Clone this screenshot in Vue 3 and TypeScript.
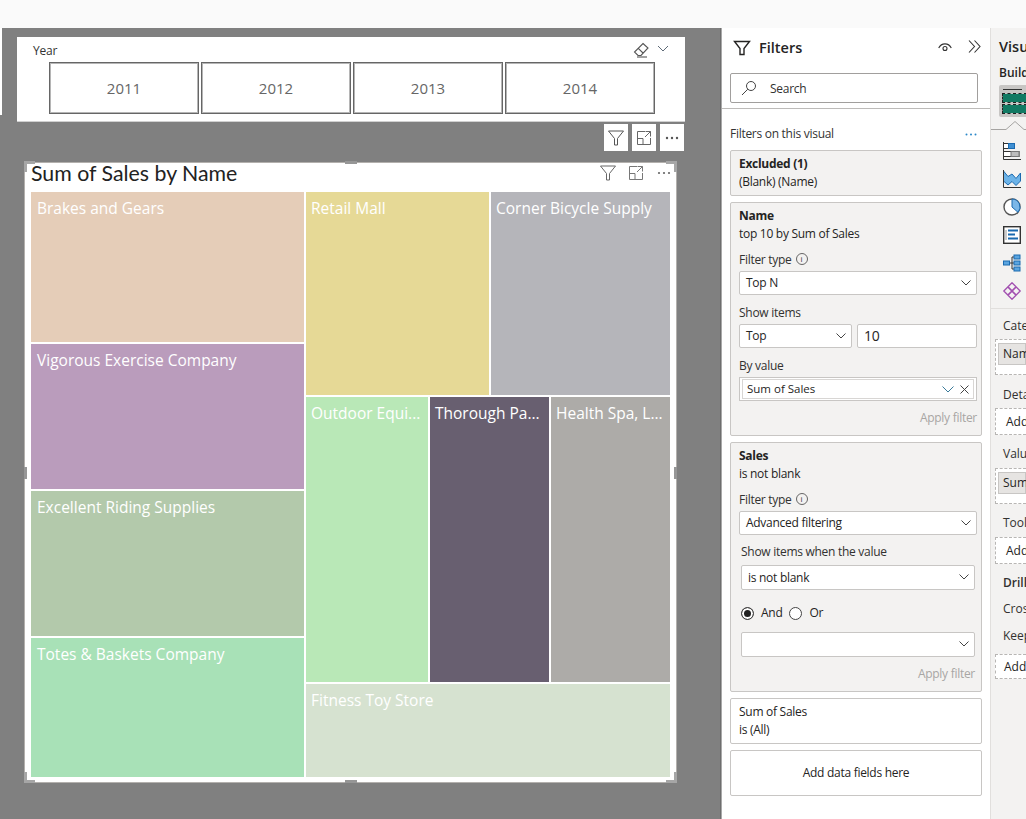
<template>
  <div class="app">
    <div class="topbar"></div>
    <div class="main">
      <section class="canvas">
        <div class="slicer">
          <div class="slicerHead">
            <span class="slicerTitle">Year</span>
            <svg class="eraser" width="16" height="16" viewBox="0 0 16 16">
              <path d="M10 1.500 15 6l-7 7.500H5L1.500 10zM5 6.200l5 4.800" fill="none" stroke="#555" stroke-width="1.100" />
              <path d="M4 15h10" fill="none" stroke="#555" stroke-width="1.100" />
            </svg>
            <svg class="chev" width="12" height="7" viewBox="0 0 12 7">
              <path d="M1 1l5 5 5-5" fill="none" stroke="#5f6b78" stroke-width="1" />
            </svg>
          </div>
          <div class="years">
            <div v-for="y in years" :key="y" class="yearBtn">{{ y }}</div>
          </div>
        </div>
        <div class="slicerTools">
          <span class="toolBox">
            <svg width="18" height="18" viewBox="0 0 18 18"><path d="M1.500 2h15l-6 7.500V16h-3V9.500z" fill="none" stroke="#555" /></svg>
          </span>
          <span class="toolBox">
            <svg width="16" height="16" viewBox="0 0 16 16"><path d="M9 1.500h-7.500v13h13V8M1.500 8.500H7v6M9.500 1.500h5v5M14.500 1.500 9 7" fill="none" stroke="#666" /></svg>
          </span>
          <span class="toolBox">
            <svg width="14" height="4" viewBox="0 0 14 4"><circle cx="2" cy="2" r="1.200" fill="#555" /><circle cx="7" cy="2" r="1.200" fill="#555" /><circle cx="12" cy="2" r="1.200" fill="#555" /></svg>
          </span>
        </div>
        <div class="visual">
          <i class="corner tl"></i><i class="corner tr"></i><i class="corner bl"></i><i class="corner br"></i>
          <i class="grip top"></i><i class="grip bottom"></i><i class="gripV left"></i><i class="gripV right"></i>
          <div class="visualHead">
            <span class="visualTitle">Sum of Sales by Name</span>
            <svg class="hIcon" width="18" height="18" viewBox="0 0 18 18"><path d="M1.500 2h15l-6 7.500V16h-3V9.500z" fill="none" stroke="#666" /></svg>
            <svg class="hIcon last" width="16" height="16" viewBox="0 0 16 16"><path d="M9 1.500h-7.500v13h13V8M1.500 8.500H7v6M9.500 1.500h5v5M14.500 1.500 9 7" fill="none" stroke="#777" /></svg>
            <svg class="hDots" width="14" height="4" viewBox="0 0 14 4"><circle cx="2" cy="2" r="1.100" fill="#666" /><circle cx="7" cy="2" r="1.100" fill="#666" /><circle cx="12" cy="2" r="1.100" fill="#666" /></svg>
          </div>
          <div class="tree">
            <div class="treeLeft">
              <div v-for="c in leftCells" :key="c.name" class="cell" :style="{ height: c.h + 'px', background: c.color }">{{ c.name }}</div>
            </div>
            <div class="treeRight">
              <div class="treeRow rowTop">
                <div v-for="c in rowOne" :key="c.name" class="cell" :style="{ width: c.w + 'px', background: c.color }">{{ c.name }}</div>
              </div>
              <div class="treeRow rowMid">
                <div v-for="c in rowTwo" :key="c.name" class="cell" :style="{ width: c.w + 'px', background: c.color }">{{ c.name }}</div>
              </div>
              <div class="cell fitness">Fitness Toy Store</div>
            </div>
          </div>
        </div>
      </section>

      <aside class="filters">
        <div class="fHead">
          <svg width="18" height="18" viewBox="0 0 18 18"><path d="M1.500 2.500h15L11 9.500V15.500H7V9.500z" fill="none" stroke="#252423" stroke-width="1.400" /></svg>
          <span class="fTitle">Filters</span>
          <svg class="eye" width="14" height="9" viewBox="0 0 14 9"><path d="M.7 5c2.800-5.500 9.800-5.500 12.600 0" fill="none" stroke="#333" stroke-width="1.100" /><circle cx="7" cy="5.500" r="2" fill="none" stroke="#333" stroke-width="1.100" /></svg>
          <svg class="dbl" width="13" height="13" viewBox="0 0 13 13"><path d="M1 .5l5.500 6-5.500 6M6.500.5l5.500 6-5.500 6" fill="none" stroke="#333" stroke-width="1.100" /></svg>
        </div>
        <div class="search">
          <svg width="16" height="16" viewBox="0 0 16 16"><circle cx="10" cy="6" r="4.500" fill="none" stroke="#444" /><path d="M6.800 9.200 1 15" fill="none" stroke="#444" /></svg>
          <span>Search</span>
        </div>
        <div class="fRule"></div>
        <div class="onVisual">
          <span>Filters on this visual</span>
          <svg class="blueDots" width="12" height="3" viewBox="0 0 12 3"><circle cx="1.500" cy="1.500" r="1" fill="#2b88c8" /><circle cx="6" cy="1.500" r="1" fill="#2b88c8" /><circle cx="10.500" cy="1.500" r="1" fill="#2b88c8" /></svg>
        </div>

        <div class="fCard excluded">
          <b>Excluded (1)</b>
          <div>(Blank) (Name)</div>
        </div>

        <div class="fCard nameCard">
          <b>Name</b>
          <div>top 10 by Sum of Sales</div>
          <div class="lbl typeLbl">Filter type <span class="info">i</span></div>
          <div class="select">Top N<svg class="selChev" width="10" height="6" viewBox="0 0 10 6"><path d="M.5.500 5 5 9.500.500" fill="none" stroke="#444" /></svg></div>
          <div class="lbl showLbl">Show items</div>
          <div class="pair">
            <div class="select short">Top<svg class="selChev" width="10" height="6" viewBox="0 0 10 6"><path d="M.5.500 5 5 9.500.500" fill="none" stroke="#444" /></svg></div>
            <div class="select num">10</div>
          </div>
          <div class="lbl showLbl">By value</div>
          <div class="wellOuter">
            <div class="well">
              <span>Sum of Sales</span>
              <svg class="wellChev" width="12" height="7" viewBox="0 0 12 7"><path d="M.5.500 6 6l5.500-5.500" fill="none" stroke="#3a7a99" /></svg>
              <svg width="9" height="9" viewBox="0 0 9 9"><path d="M.5.500l8 8M8.500.500l-8 8" fill="none" stroke="#444" /></svg>
            </div>
          </div>
          <div class="apply">Apply filter</div>
        </div>

        <div class="fCard salesCard">
          <b>Sales</b>
          <div>is not blank</div>
          <div class="lbl typeLbl">Filter type <span class="info">i</span></div>
          <div class="select">Advanced filtering<svg class="selChev" width="10" height="6" viewBox="0 0 10 6"><path d="M.5.500 5 5 9.500.500" fill="none" stroke="#444" /></svg></div>
          <div class="lbl whenLbl">Show items when the value</div>
          <div class="select inset">is not blank<svg class="selChev" width="10" height="6" viewBox="0 0 10 6"><path d="M.5.500 5 5 9.500.500" fill="none" stroke="#444" /></svg></div>
          <div class="radios">
            <span class="radio on"></span><span>And</span>
            <span class="radio"></span><span>Or</span>
          </div>
          <div class="select inset"><svg class="selChev" width="10" height="6" viewBox="0 0 10 6"><path d="M.5.500 5 5 9.500.500" fill="none" stroke="#444" /></svg></div>
          <div class="apply second">Apply filter</div>
        </div>

        <div class="fCard white allCard">
          <div>Sum of Sales</div>
          <div>is (All)</div>
        </div>
        <div class="fCard white addCard">Add data fields here</div>
      </aside>

      <aside class="viz">
        <div class="vTitle">Visu</div>
        <div class="vBuild">Build</div>
        <div class="vSelected">
          <i class="vLine"></i>
          <i class="vBar"></i>
          <i class="vBar"></i>
        </div>
        <svg class="vNotch" width="35" height="14" viewBox="0 0 35 14"><path d="M0 13.500h15l9-8 9 8h2" fill="#f3f2f1" stroke="#a6a4a2" /></svg>
        <div class="vIcons">
          <svg width="18" height="18" viewBox="0 0 18 18"><path d="M.5 0v17.500H18" fill="none" stroke="#333" /><rect x=".5" y="1.500" width="11" height="5" fill="#fff" stroke="#333" /><rect x="5.500" y="1.500" width="6" height="5" fill="#3f8fd2" stroke="#1b6ab0" /><rect x=".5" y="9.500" width="15.500" height="5" fill="#fff" stroke="#333" /><rect x="8" y="9.500" width="8" height="5" fill="#bdbdbd" stroke="#777" /></svg>
          <svg width="18" height="18" viewBox="0 0 18 18"><path d="M.5 1 5 6.500 9 4l4 4.500L17.500 3v8L13 15.500 9 11.500l-4 3.500-4.500-4z" fill="#6cb3e8" stroke="#1b6ab0" /><path d="M.5 0v17.500H18" fill="none" stroke="#333" /></svg>
          <svg width="18" height="18" viewBox="0 0 18 18"><circle cx="9" cy="9" r="8" fill="#fff" stroke="#555" stroke-width="1.400" /><path d="M9 1a8 8 0 0 1 6 13.300L9 9z" fill="#7bb7e8" stroke="#1b6ab0" /></svg>
          <svg width="18" height="18" viewBox="0 0 18 18"><rect x=".7" y=".7" width="16.600" height="16.600" fill="#fff" stroke="#333" stroke-width="1.400" /><path d="M3 4v10" stroke="#999" /><path d="M5 4.500h10M5 8.500h7M5 12.500h10" stroke="#1b6ab0" stroke-width="1.800" /></svg>
          <svg width="18" height="18" viewBox="0 0 18 18"><path d="M6 9h5M9 3v12M9 3h2M9 15h2" stroke="#333" fill="none" /><rect x=".5" y="7" width="6" height="4" fill="#5ba5e0" stroke="#1b6ab0" /><rect x="11" y="1" width="6" height="4" fill="#5ba5e0" stroke="#1b6ab0" /><rect x="11" y="7" width="6" height="4" fill="#5ba5e0" stroke="#1b6ab0" /><rect x="11" y="13" width="6" height="4" fill="#5ba5e0" stroke="#1b6ab0" /></svg>
          <svg width="18" height="18" viewBox="0 0 18 18"><path d="M9 .8 13 4.800 9 8.800 5 4.800zM13.200 5 17.200 9 13.200 13 9.200 9zM9 9.200 13 13.200 9 17.200 5 13.200zM4.800 5 8.800 9 4.800 13 .8 9z" fill="none" stroke="#a24fb0" stroke-width="1.300" stroke-linejoin="round" /></svg>
        </div>
        <div class="vDivider"></div>
        <div class="vLabel cate">Cate</div>
        <div class="vDrop tall first"><span class="vPill">Nam</span></div>
        <div class="vLabel deta">Deta</div>
        <div class="vDrop first">Add</div>
        <div class="vLabel valu">Valu</div>
        <div class="vDrop tall"><span class="vPill">Sum</span></div>
        <div class="vLabel valu">Tool</div>
        <div class="vDrop">Add</div>
        <div class="vLabel valu"><b>Drill</b></div>
        <div class="vLabel cros">Cros</div>
        <div class="vLabel keep">Keep</div>
        <div class="vDrop add">Add</div>
      </aside>
    </div>
  </div>
</template>

<script setup lang="ts">
interface Cell {
  name: string;
  color: string;
  h?: number;
  w?: number;
}

const years: number[] = [2011, 2012, 2013, 2014];

const leftCells: Cell[] = [
  { name: "Brakes and Gears", color: "#e5cdb8", h: 150 },
  { name: "Vigorous Exercise Company", color: "#ba9cbc", h: 145 },
  { name: "Excellent Riding Supplies", color: "#b3c9ab", h: 145 },
  { name: "Totes & Baskets Company", color: "#a8e1b7", h: 139 },
];

const rowOne: Cell[] = [
  { name: "Retail Mall", color: "#e6d996", w: 183 },
  { name: "Corner Bicycle Supply", color: "#b5b5ba", w: 179 },
];

const rowTwo: Cell[] = [
  { name: "Outdoor Equi...", color: "#b9e8b7", w: 122 },
  { name: "Thorough Pa...", color: "#685f70", w: 119 },
  { name: "Health Spa, L...", color: "#adaba8", w: 119 },
];
</script>

<style>
html,
body {
  margin: 0;
  overflow: hidden;
}
</style>

<style scoped>
.app {
  width: 1026px;
  height: 819px;
  overflow: hidden;
  font-family: "Open Sans", "Liberation Sans", sans-serif;
  color: #252423;
  background: #fff;
  display: flex;
  flex-direction: column;
}
.topbar {
  height: 28px;
  background: #fafafa;
  flex: none;
}
.main {
  flex: 1;
  display: flex;
  min-height: 0;
}

/* canvas */
.canvas {
  width: 721px;
  flex: none;
  background: #808080;
  position: relative;
  padding-top: 9px;
  box-sizing: border-box;
  border-right: 1px solid #6e6e6e;
}
.canvas::before {
  content: "";
  position: absolute;
  left: 0;
  top: 0;
  width: 2px;
  height: 87px;
  background: #fff;
}
.slicer {
  margin-left: 17px;
  width: 668px;
  height: 85px;
  background: #fff;
  border-bottom: 1px solid #d0d0d0;
  box-sizing: border-box;
  padding: 5px 0 0 16px;
}
.slicerHead {
  display: flex;
  align-items: center;
  height: 17px;
  padding-right: 16px;
}
.slicerTitle {
  font-size: 12px;
  letter-spacing: -0.2px;
  color: #333;
  margin-right: auto;
}
.eraser {
  margin-right: 8px;
  margin-bottom: 1px;
}
.chev {
  margin-bottom: 5px;
}
.years {
  display: flex;
  gap: 2px;
  margin: 3px 0 0 16px;
}
.yearBtn {
  width: 150px;
  height: 52px;
  box-sizing: border-box;
  border: 1px solid #666;
  box-shadow: inset 0 0 0 1px #b5b5b5;
  display: flex;
  align-items: center;
  justify-content: center;
  font-size: 15px;
  color: #666;
}
.slicerTools {
  width: 667px;
  margin: 2px 0 0 17px;
  display: flex;
  justify-content: flex-end;
  gap: 4px;
  height: 27px;
}
.toolBox {
  width: 24px;
  height: 27px;
  background: #fff;
  display: flex;
  align-items: center;
  justify-content: center;
}
.visual {
  position: relative;
  margin: 11px 0 0 24px;
  width: 653px;
  height: 621px;
  box-sizing: border-box;
  background: #fff;
  border: 1px solid #b3b0ad;
  padding: 0 6px;
}
.corner {
  position: absolute;
  width: 8px;
  height: 8px;
  border: 0 solid #a6a6a6;
}
.corner.tl {
  left: -1px;
  top: -2px;
  border-width: 3px 0 0 3px;
}
.corner.tr {
  right: -1px;
  top: -2px;
  border-width: 3px 3px 0 0;
}
.corner.bl {
  left: -1px;
  bottom: -1px;
  border-width: 0 0 3px 3px;
}
.corner.br {
  right: -1px;
  bottom: -1px;
  border-width: 0 3px 3px 0;
}
.grip {
  position: absolute;
  left: 320px;
  width: 12px;
  height: 3px;
  background: #969696;
}
.grip.top {
  top: -2px;
}
.grip.bottom {
  bottom: -1px;
}
.gripV {
  position: absolute;
  top: 304px;
  width: 3px;
  height: 12px;
  background: #969696;
}
.gripV.left {
  left: -1px;
}
.gripV.right {
  right: -1px;
}
.visualHead {
  height: 28px;
  box-sizing: border-box;
  padding-bottom: 8px;
  display: flex;
  align-items: center;
}
.visualTitle {
  font-family: Lato, "Open Sans", sans-serif;
  font-size: 21.300px;
  color: #222;
  margin-right: auto;
}
.hIcon {
  margin-right: 11px;
}
.hIcon.last {
  margin-right: 13px;
}
.hDots {
  margin-right: -1px;
}
.tree {
  display: flex;
  gap: 2px;
  width: 639px;
  height: 585px;
  margin-top: 1px;
}
.treeLeft {
  width: 273px;
  display: flex;
  flex-direction: column;
  gap: 2px;
}
.treeRight {
  width: 364px;
  display: flex;
  flex-direction: column;
  gap: 2px;
}
.treeRow {
  display: flex;
  gap: 2px;
}
.rowTop {
  height: 203px;
}
.rowMid {
  height: 285px;
}
.cell {
  box-sizing: border-box;
  padding: 6px 0 0 6px;
  color: #fff;
  font-size: 15.500px;
  line-height: 20px;
  white-space: nowrap;
  overflow: hidden;
}
.treeRight .cell {
  padding-left: 5px;
}
.fitness {
  height: 93px;
  background: #d6e2d0;
}

/* filters pane */
.filters {
  width: 270px;
  flex: none;
  box-sizing: border-box;
  background: #fff;
  border-right: 1px solid #e1dfdd;
  border-left: 1px solid #a9a9a9;
  font-size: 12px;
  letter-spacing: -0.28px;
  padding-top: 10px;
}
.fHead {
  display: flex;
  align-items: center;
  height: 19px;
  padding: 0 9px 0 11px;
}
.fTitle {
  font-size: 14.500px;
  font-weight: 600;
  letter-spacing: 0;
  margin-left: 8px;
  margin-right: auto;
}
.eye {
  margin-right: 16px;
  margin-bottom: 1px;
}
.dbl {
  margin-bottom: 2px;
}
.search {
  margin: 16px 0 0 8px;
  width: 248px;
  height: 30px;
  box-sizing: border-box;
  border: 1px solid #a19f9d;
  border-radius: 2px;
  display: flex;
  align-items: center;
  padding-left: 10px;
  gap: 13px;
  color: #323130;
}
.fRule {
  height: 1px;
  background: #bdbbb9;
  margin-top: 5px;
}
.onVisual {
  display: flex;
  justify-content: space-between;
  align-items: center;
  width: 248px;
  margin: 15px 0 0 8px;
  height: 20px;
  line-height: 20px;
  color: #333;
}
.blueDots {
  margin-right: 1px;
}
.fCard {
  margin: 6px 0 0 8px;
  width: 252px;
  box-sizing: border-box;
  background: #f3f2f1;
  border: 1px solid #c8c6c4;
  border-radius: 2px;
  padding: 4px 4px 4px 8px;
  line-height: 18px;
  color: #252423;
}
.fCard b {
  font-weight: 700;
  display: block;
}
.excluded {
  height: 46px;
}
.nameCard {
  height: 234px;
}
.salesCard {
  height: 250px;
}
.lbl {
  color: #323130;
  display: flex;
  align-items: center;
  gap: 4px;
}
.typeLbl {
  margin-top: 8px;
}
.showLbl {
  margin-top: 9px;
}
.info {
  width: 10px;
  height: 10px;
  border: 1px solid #666;
  border-radius: 50%;
  font-size: 8px;
  line-height: 10px;
  text-align: center;
  letter-spacing: 0;
  margin-top: -3px;
}
.select {
  position: relative;
  height: 24px;
  box-sizing: border-box;
  margin-top: 2px;
  background: #fff;
  border: 1px solid #c8c6c4;
  border-radius: 2px;
  padding-left: 6px;
  display: flex;
  align-items: center;
}
.selChev {
  position: absolute;
  right: 5px;
  top: 8px;
}
.inset {
  margin: 4px 2px 0;
  height: 25px;
}
.pair {
  display: flex;
  gap: 5px;
  margin-top: 2px;
}
.pair .select {
  margin-top: 0;
}
.short {
  width: 113px;
}
.num {
  width: 120px;
  font-size: 14px;
}
.wellOuter {
  margin-top: 2px;
  height: 24px;
  box-sizing: border-box;
  background: #fff;
  border: 1px solid #c8c6c4;
  padding: 1px 2px;
}
.well {
  height: 20px;
  box-sizing: border-box;
  border: 1px solid #d8d6d4;
  display: flex;
  align-items: center;
  padding: 0 4px;
  gap: 4px;
  font-size: 11.500px;
  letter-spacing: 0;
}
.well span {
  margin-right: auto;
}
.wellChev {
  margin-right: 2px;
}
.apply {
  text-align: right;
  color: #a8a6a4;
  margin-top: 8px;
}
.second {
  margin-right: 2px;
}
.whenLbl {
  margin: 8px 0 0 2px;
}
.radios {
  display: flex;
  align-items: center;
  height: 16px;
  gap: 7px;
  margin: 15px 0 0 2px;
}
.radios + .inset {
  margin-top: 11px;
}
.radio {
  width: 13px;
  height: 13px;
  box-sizing: border-box;
  border: 1px solid #444;
  border-radius: 50%;
  background: #fff;
}
.radio.on {
  background: #222;
  box-shadow: inset 0 0 0 2px #fff;
}
.white {
  background: #fff;
}
.allCard {
  height: 46px;
}
.addCard {
  height: 46px;
  display: flex;
  align-items: center;
  justify-content: center;
  padding-right: 8px;
}

/* visualizations pane, cut by the window */
.viz {
  flex: 1;
  min-width: 0;
  background: #f3f2f1;
  position: relative;
  overflow: hidden;
  font-size: 12px;
  white-space: nowrap;
}
.vTitle {
  font-size: 14.500px;
  font-weight: 600;
  margin: 9px 0 0 8px;
  height: 20px;
}
.vBuild {
  font-weight: 600;
  margin: 7px 0 0 8px;
  height: 17px;
}
.vSelected {
  margin: 4px 0 0 8px;
  height: 32px;
  background: #c8c6c4;
  border-radius: 2px 0 0 2px;
  padding: 4px 0 0 4px;
  box-sizing: border-box;
}
.vLine {
  display: block;
  width: 19px;
  height: 1px;
  background: #333;
  margin-bottom: 4px;
}
.vBar {
  display: block;
  height: 8px;
  background: #127a63;
  outline: 1px dashed #222;
  margin-bottom: 3px;
}
.vNotch {
  display: block;
  margin-top: -1px;
}
.vIcons {
  display: flex;
  flex-direction: column;
  gap: 10px;
  margin: 12px 0 0 12px;
}
.vDivider {
  height: 1px;
  background: #e1dfdd;
  margin-top: 8px;
}
.vLabel {
  margin-left: 12px;
  color: #323130;
  height: 18px;
  line-height: 18px;
}
.vLabel b {
  font-weight: 600;
}
.cate {
  margin-top: 8px;
}
.deta {
  margin-top: 11px;
}
.valu {
  margin-top: 10px;
}
.cros {
  margin-top: 8px;
}
.keep {
  margin-top: 9px;
}
.vDrop {
  margin: 5px 0 0 4px;
  height: 27px;
  box-sizing: border-box;
  border: 1px dashed #b8b6b4;
  border-right: 0;
  background: #fff;
  padding-left: 10px;
  line-height: 26px;
}
.vDrop.first {
  margin-top: 4px;
}
.vDrop.tall {
  height: 36px;
  padding: 3px 0 0 2px;
}
.vDrop.add {
  margin-top: 9px;
  height: 25px;
  line-height: 24px;
  padding-left: 8px;
}
.vPill {
  display: block;
  height: 22px;
  line-height: 20px;
  box-sizing: border-box;
  background: #e6e4e2;
  border: 1px solid #c8c6c4;
  padding-left: 4px;
}
</style>
